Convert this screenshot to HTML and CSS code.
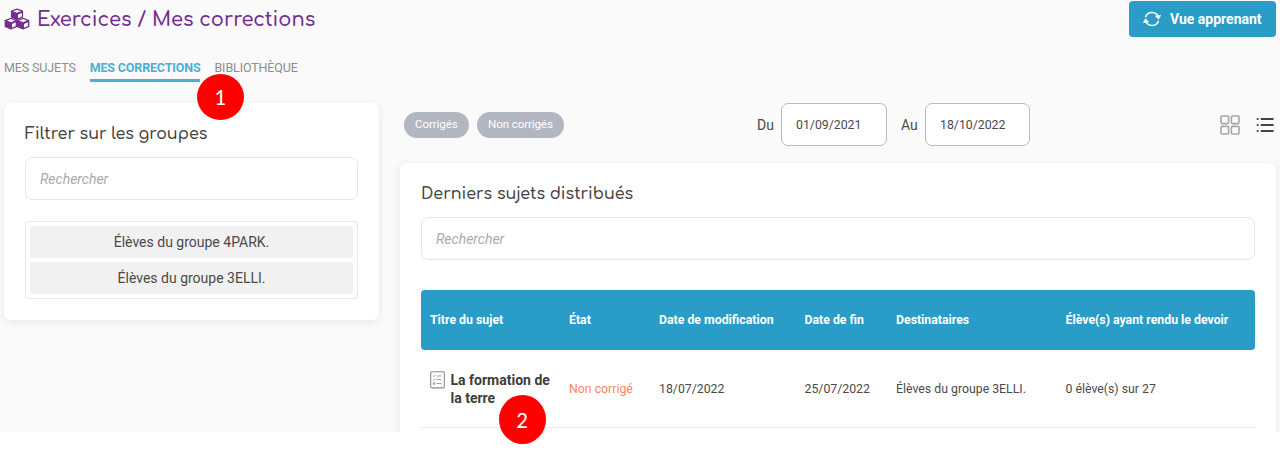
FILE: index.html
```html
<!DOCTYPE html>
<html lang="fr">
<head>
<meta charset="utf-8">
<title>Exercices / Mes corrections</title>
<link rel="stylesheet" href="styles.css">
</head>
<body>
<div class="app">
  <header class="topbar">
    <h1 class="page-title">
      <svg class="cubes" viewBox="0 0 26 22">
        <g fill="currentColor" stroke="currentColor" stroke-width="1.2" stroke-linejoin="round">
          <path d="M13 1 18.5 3v6L13 11.4 7.5 9V3Z"/>
          <path d="M7 10.4 12.6 12.5v6L7 21 1.2 18.5v-6Z"/>
          <path d="M19 10.4 24.8 12.5v6L19 21l-5.6-2.5v-6Z"/>
        </g>
        <g fill="#fafafa">
          <path d="m13 1.7 4 1.5-4 1.6-4-1.6ZM14 6.6l3.9-1.7v3.7L14 10.3Z"/>
          <path d="m7 11.1 4 1.5-4 1.6-4-1.6ZM8 16l3.7-1.7V18L8 19.7Z"/>
          <path d="m19 11.1 4 1.5-4 1.6-4-1.6ZM20 16l3.9-1.7V18L20 19.7Z"/>
        </g>
      </svg>
      <span class="title-text">Exercices / Mes corrections</span>
    </h1>
    <button class="learner-button">
      <svg class="sync" viewBox="0 0 18 18" fill="none" stroke="currentColor" stroke-width="1.4">
        <path d="M2.4 7.2A6.9 6.9 0 0 1 15.6 7.6M15.6 10.8A6.9 6.9 0 0 1 2.4 10.4"/>
        <path fill="currentColor" stroke-width=".5" d="m12.2 6 5.6-.7-2.3 4ZM5.8 12l-5.6.7 2.3-4Z"/>
      </svg>
      <span>Vue apprenant</span>
    </button>
  </header>
  <nav class="tabs">
    <a class="tab">MES SUJETS</a>
    <a class="tab active">MES CORRECTIONS<span class="marker marker-one">1</span></a>
    <a class="tab">BIBLIOTHÈQUE</a>
  </nav>
  <div class="columns">
    <aside class="card filter">
      <h2 class="card-title">Filtrer sur les groupes</h2>
      <div class="search">Rechercher</div>
      <div class="groups">
        <div class="group">Élèves du groupe 4PARK.</div>
        <div class="group">Élèves du groupe 3ELLI.</div>
      </div>
    </aside>
    <main class="main">
      <div class="toolbar">
        <div class="chips">
          <span class="chip">Corrigés</span>
          <span class="chip">Non corrigés</span>
        </div>
        <div class="dates">
          <span class="date-label">Du</span><span class="date">01/09/2021</span>
          <span class="date-label">Au</span><span class="date">18/10/2022</span>
        </div>
        <div class="views">
          <svg class="grid-view" viewBox="0 0 20 20" fill="none" stroke="#a6a6a6" stroke-width="1.6">
            <rect x="1" y="1" width="7.6" height="7.6" rx="1"/><rect x="11.4" y="1" width="7.6" height="7.6" rx="1"/>
            <rect x="1" y="11.4" width="7.6" height="7.6" rx="1"/><rect x="11.4" y="11.4" width="7.6" height="7.6" rx="1"/>
          </svg>
          <svg class="list-view" viewBox="0 0 18 16" stroke="#444" stroke-width="1.8" stroke-linecap="round">
            <path d="M5.5 2h11.4M5.5 8h11.4M5.5 14h11.4M1.5 2h.3M1.5 8h.3M1.5 14h.3"/>
          </svg>
        </div>
      </div>
      <section class="card subjects">
        <h2 class="card-title">Derniers sujets distribués</h2>
        <div class="search">Rechercher</div>
        <div class="table">
          <div class="row head">
            <span>Titre du sujet</span><span>État</span><span>Date de modification</span><span>Date de fin</span><span>Destinataires</span><span>Élève(s) ayant rendu le devoir</span>
          </div>
          <div class="row entry">
            <div class="subject">
              <svg class="sheet" viewBox="0 0 15 18" fill="none" stroke="#8a8a8a">
                <rect x=".7" y=".7" width="13.6" height="16.2" rx="1.5" stroke-width="1.1"/>
                <path stroke-width=".8" d="M6.5 5h5M6.5 8.7h5M6.5 12.5h5M3 4.8l.9.8L5.3 4M3 8.5l.9.8 1.4-1.6M3.2 11.7h1.7v1.6H3.2Z"/>
              </svg>
              <span class="subject-name">La formation de la terre<span class="marker marker-two">2</span></span>
            </div>
            <span class="state">Non corrigé</span><span>18/07/2022</span><span class="end-date">25/07/2022</span><span>Élèves du groupe 3ELLI.</span><span>0 élève(s) sur 27</span>
          </div>
        </div>
      </section>
    </main>
  </div>
</div>
<footer class="page-end"></footer>
</body>
</html>
```

FILE: styles.css
```css
* { box-sizing: border-box; }
body { margin: 0; background: #fff; font-family: Roboto, "Liberation Sans", sans-serif; color: #4a4a4a; }
.app { height: 432px; background: #fafafa; }
.page-end { position: relative; z-index: 1; height: 20px; background: #fff; }
.topbar { display: flex; justify-content: space-between; align-items: flex-start; height: 55px; padding: 1px 4px 0 4px; }
.page-title { display: flex; align-items: center; gap: 7px; height: 36px; margin: 0; color: #732d91; font: 600 19.4px/34px Comfortaa, Quicksand, Lato, sans-serif; }
.cubes { width: 26px; height: 22px; }
.title-text { padding-top: 1px; white-space: nowrap; }
.learner-button { display: flex; align-items: center; gap: 9px; width: 147px; height: 36px; padding: 0 0 0 14px; border: 0; border-radius: 4px; background: #2a9cc8; color: #fff; font: 700 14px Roboto, sans-serif; white-space: nowrap; }
.sync { width: 18px; height: 18px; }
.tabs { display: flex; gap: 14px; height: 48px; padding: 3px 4px 0; }
.tab { position: relative; height: 24px; color: #8d8d8d; font-size: 12.5px; letter-spacing: -.13px; line-height: 20px; white-space: nowrap; }
.active { border-bottom: 3px solid #4bafd5; color: #4bafd5; font-weight: 700; letter-spacing: -.16px; }
.marker { position: absolute; z-index: 2; width: 47px; border-radius: 50%; background: #f00; color: #fff; text-align: center; font-family: Carlito, Lato, "Open Sans", sans-serif; font-weight: 400; font-size: 23px; letter-spacing: 0; }
.marker-one { left: 107px; top: 16px; height: 46px; line-height: 47px; }
.marker-two { left: 48px; top: 24px; height: 49px; line-height: 50px; }
.columns { display: flex; gap: 21px; padding: 0 4px; }
.card { border-radius: 7px; background: #fff; box-shadow: 0 2px 8px rgba(0,0,0,.08); }
.filter { width: 375px; height: 217px; padding: 20px 21px; }
.card-title { margin: 0; color: #444; font: 600 15.9px/22px Comfortaa, Quicksand, Lato, sans-serif; white-space: nowrap; }
.search { height: 43px; margin-top: 12px; padding: 0 14px; border: 1px solid #e6e6e6; border-radius: 7px; color: #aaa; font-size: 14px; font-style: italic; line-height: 42px; }
.groups { display: grid; gap: 4px; height: 78px; margin-top: 21px; padding: 4px; border: 1px solid #e9e9e9; border-radius: 3px; }
.group { border-radius: 2px; background: #f1f1f1; text-align: center; font-size: 14px; line-height: 32px; }
.main { width: 876px; }
.toolbar { display: flex; align-items: center; height: 43px; }
.chips { display: flex; gap: 8.5px; width: 357px; padding-left: 4px; }
.chip { height: 26px; padding: 0 11px; border-radius: 13px; background: #b1b6c1; color: #fff; font-size: 11.6px; letter-spacing: -.12px; line-height: 25px; white-space: nowrap; }
.dates { display: flex; align-items: center; width: 463px; }
.date-label { width: 24px; font-size: 14px; }
.date { width: 106px; height: 43px; margin-right: 14px; padding-left: 14px; border: 1px solid #bbb; border-radius: 7px; background: #fff; font-size: 12.3px; line-height: 42px; }
.date + .date-label + .date { width: 105px; }
.views { display: flex; align-items: center; gap: 16px; }
.grid-view { width: 20px; height: 20px; }
.list-view { width: 18px; height: 16px; }
.subjects { height: 269px; margin-top: 17px; padding: 20px 21px; border-radius: 7px 7px 0 0; }
.table { margin-top: 30px; font-size: 12.3px; }
.row { display: grid; grid-template-columns: 139px 90px 145.5px 91.5px 169.5px 180px; align-items: center; padding-left: 9px; white-space: nowrap; }
.head { height: 60px; border-radius: 4px; background: #2a9cc8; color: #fff; font-weight: 700; }
.entry { height: 78px; border-bottom: 1px solid #e9e9e9; }
.subject { display: flex; gap: 5.5px; width: 126px; }
.sheet { flex: none; width: 15px; height: 18px; }
.subject-name { position: relative; width: 102px; color: #3d3d3d; font-size: 14px; font-weight: 700; line-height: 18px; white-space: normal; }
.state { color: #ff8360; }
```
